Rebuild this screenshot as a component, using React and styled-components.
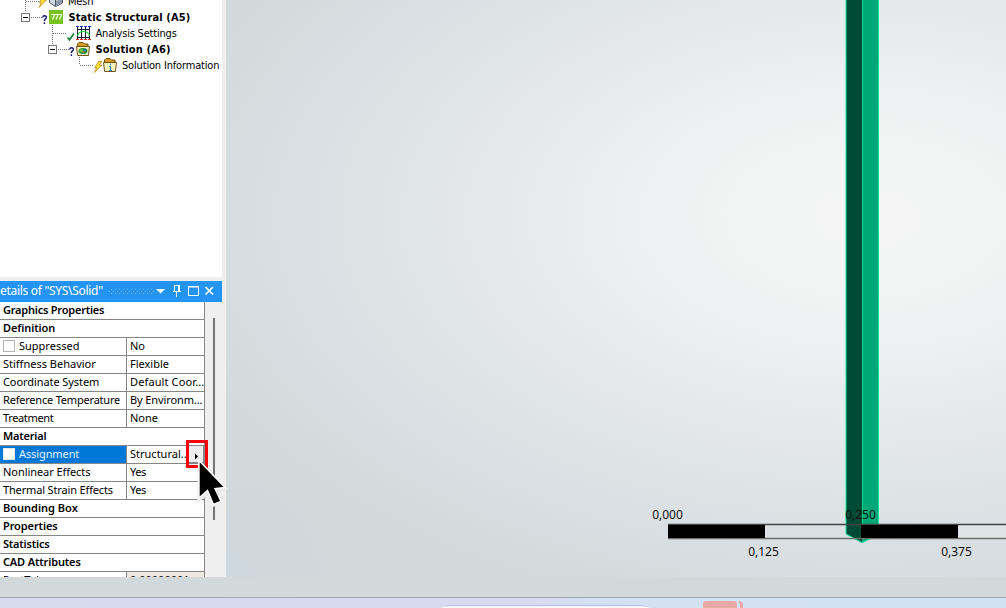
import React from 'react';
import styled, { createGlobalStyle } from 'styled-components';

const Global = createGlobalStyle`
  * { box-sizing: border-box; }
  body { margin: 0; overflow: hidden; background: #d2d9db; }
`;

const Window = styled.div`
  width: 1006px;
  height: 608px;
  display: flex;
  flex-direction: column;
  overflow: hidden;
  position: relative;
  background: #d2d9db;
  font-family: 'Noto Sans', 'Open Sans', sans-serif;
  color: #000;
`;

const Main = styled.main`
  height: 577px;
  display: flex;
`;

const Sidebar = styled.aside`
  width: 226px;
  height: 577px;
  flex: none;
  display: flex;
  flex-direction: column;
  background: #efefef;
`;

const Outline = styled.section`
  width: 222px;
  height: 277px;
  background: #fff;
  margin-bottom: 4px;
  overflow: hidden;
`;

const Tree = styled.div`
  margin-top: -6px;
  position: relative;
`;

const TreeLines = styled.svg`
  position: absolute;
  left: 0;
  top: 6px;
  display: block;
`;

const TreeItem = styled.div`
  height: 16px;
  display: flex;
  align-items: center;
  padding-left: ${(p) => p.$indent}px;
  font: ${(p) => (p.$bold ? 'bold' : 'normal')} 11px/16px 'DejaVu Sans Condensed', 'DejaVu Sans', sans-serif;
  font-stretch: condensed;
  letter-spacing: ${(p) => p.$track || 0}px;
  white-space: nowrap;
`;

const Titlebar = styled.header`
  width: 222px;
  height: 21px;
  flex: none;
  display: flex;
  align-items: center;
  overflow: hidden;
  background: #2494f2;
  color: #fff;
`;

const Title = styled.span`
  width: 107px;
  flex: none;
  font-size: 12px;
  line-height: 20px;
  padding-bottom: 1px;
  letter-spacing: ${(p) => p.$track}px;
  white-space: nowrap;
`;

const DetailsBody = styled.div`
  display: flex;
  flex: 1;
  min-height: 0;
  overflow: hidden;
`;

const Grid = styled.div`
  width: 205px;
  flex: none;
  border-right: 1px solid #868686;
  background: #fff;
`;

const Row = styled.div`
  height: 18px;
  display: flex;
  border-bottom: 1px solid #868686;
  font-size: 11px;
  line-height: 15px;
  white-space: nowrap;
`;

const Group = styled.div`
  padding-left: 3px;
  font-weight: 600;
  letter-spacing: ${(p) => p.$track || 0}px;
`;

const Name = styled.div`
  width: 127px;
  flex: none;
  display: flex;
  align-items: flex-start;
  padding-left: 3px;
  border-right: 1px solid #868686;
  letter-spacing: ${(p) => p.$track || 0}px;
  background: ${(p) => (p.$selected ? '#0078d7' : '#fff')};
  color: ${(p) => (p.$selected ? '#e4f1fb' : '#000')};
`;

const Value = styled.div`
  flex: 1;
  padding-left: 3px;
  overflow: hidden;
  letter-spacing: ${(p) => p.$track || 0}px;
  background: ${(p) => (p.$readonly ? '#ece9e4' : '#fff')};
`;

const Check = styled.span`
  width: 12px;
  height: 12px;
  margin: 2px 4px 0 0;
  border: 1px solid ${(p) => (p.$selected ? '#e8e8e8' : '#b4b4b4')};
  background: #fff;
`;

const ScrollTrack = styled.div`
  width: 17px;
  padding: 16px 0 0 8px;
`;

const ScrollThumb = styled.div`
  width: 2px;
  height: 202px;
  background: #747474;
`;

const Viewport = styled.section`
  flex: 1;
  position: relative;
  overflow: hidden;
  background:
    radial-gradient(circle 110px at 0 577px, #ced6de 0%, rgba(206, 214, 222, 0) 100%),
    radial-gradient(ellipse 720px 410px at 640px 217px, #f5f5f5 0%, #f3f4f4 15%, #edeff0 34%, #e4e8ea 54%, #dae0e3 78%, #d2d9db 100%);
`;

const Scene = styled.svg`
  display: block;
`;

const ScaleLabel = styled.span`
  position: absolute;
  left: ${(p) => p.$x}px;
  top: ${(p) => p.$y}px;
  width: 60px;
  text-align: center;
  font-size: 12px;
  line-height: 16px;
  color: #111;
`;

const StatusStrip = styled.div`
  height: 20px;
  flex: none;
  background: #d2d9db;
`;

const Taskbar = styled.footer`
  height: 11px;
  flex: none;
  display: flex;
  align-items: flex-end;
  border-top: 1px solid #9fa5b2;
  background: linear-gradient(90deg, #d7dbee 0, #d8daf0 52%, #d4e1f1 60%, #d2e2f4 100%);
`;

const SearchPill = styled.div`
  width: 210px;
  height: 3px;
  margin-left: 440px;
  border-top: 1px solid #b4c0dc;
  border-radius: 12px 12px 0 0 / 3px 3px 0 0;
  background: #f4f7fc;
`;

const AppIcon = styled.svg`
  display: block;
  margin-left: 53px;
`;

const Highlight = styled.div`
  position: absolute;
  left: 186px;
  top: 440px;
  width: 22px;
  height: 28px;
  padding: 3px 0 0 0;
  border: 3px solid #fb0007;
`;

const Expand = styled.button`
  display: block;
  width: 16px;
  height: 17px;
  margin: 0;
  padding: 5px 0 0 5px;
  border: 0;
  border-right: 2px solid #888;
  border-bottom: 1px solid #888;
  background: #eee;
`;

const Pointer = styled.svg`
  position: absolute;
  left: 194px;
  top: 456px;
`;

const treeItems = [
  { text: 'Mesh', indent: 68, track: -0.2 },
  { text: 'Static Structural (A5)', indent: 68.5, bold: true, track: 0.11 },
  { text: 'Analysis Settings', indent: 95.5, track: -0.2 },
  { text: 'Solution (A6)', indent: 95.5, bold: true, track: 0.14 },
  { text: 'Solution Information', indent: 122, track: -0.17 },
];

const rows = [
  { group: 'Graphics Properties', track: -0.22 },
  { group: 'Definition', track: -0.1 },
  { name: 'Suppressed', value: 'No', check: true },
  { name: 'Stiffness Behavior', value: 'Flexible' },
  { name: 'Coordinate System', value: 'Default Coor...', track: -0.08, vtrack: 0.12 },
  { name: 'Reference Temperature', value: 'By Environm...', track: -0.2, vtrack: -0.1 },
  { name: 'Treatment', value: 'None', track: -0.35 },
  { group: 'Material', track: -0.2 },
  { name: 'Assignment', value: 'Structural...', track: -0.1, check: true, selected: true },
  { name: 'Nonlinear Effects', value: 'Yes', track: -0.06, vtrack: -0.5 },
  { name: 'Thermal Strain Effects', value: 'Yes', track: -0.15, vtrack: -0.5 },
  { group: 'Bounding Box' },
  { group: 'Properties', track: -0.1 },
  { group: 'Statistics', track: -0.2 },
  { group: 'CAD Attributes', track: -0.15 },
  { name: 'PartTol...', value: '0,00000001', readonly: true },
];

const Bolt = ({ x, y }) => (
  <path
    transform={`translate(${x} ${y})`}
    d="M5 0.5 L8.5 0.5 L6 4 L8.5 4 L1 11.5 L3.2 6.8 L1.2 6.8 Z"
    fill="#ffdc35"
    stroke="#b98316"
    strokeWidth="0.7"
  />
);

const Query = ({ x, y }) => (
  <g transform={`translate(${x} ${y})`} fill="none" stroke="#18186e" strokeWidth="1.5">
    <path d="M0.7 2.5 Q0.9 0.8 2.6 0.8 Q4.5 0.8 4.4 2.4 Q4.3 3.4 3 4.4 Q2.4 4.9 2.4 6" />
    <path d="M2.4 7.3 V9" />
  </g>
);

const Folder = ({ x, y }) => (
  <g transform={`translate(${x} ${y})`}>
    <path d="M1.5 4.5 V2 L3 0.5 H7 L8.5 2 H12 V4.5" fill="#d99b24" stroke="#6f5313" />
    <path d="M0.5 4.5 H13.5 L12.4 13.5 H1.6 Z" fill="#fff3bd" stroke="#6f5313" />
  </g>
);

const Collapse = ({ x, y }) => (
  <g transform={`translate(${x} ${y})`} shapeRendering="crispEdges">
    <rect x="0.5" y="0.5" width="8" height="8" fill="#fff" stroke="#777" />
    <path d="M2 4.5 H7" stroke="#000" />
  </g>
);

function TreeGlyphs() {
  return (
    <TreeLines width="122" height="76">
      <g stroke="#777" strokeDasharray="1 1" shapeRendering="crispEdges" fill="none">
        <path d="M25.5 0 V12 M26 1.5 H39 M31 17.5 H42 M52.5 25 V45 M53 33.5 H67 M58 49.5 H69 M79.5 57 V65 M80 65.5 H94" />
      </g>
      <Bolt x={38} y={-4} />
      <path d="M49.5 -3 V2.5 L55.5 6.5 L62.5 3 V-3 M55.5 6 V0 L62 -2" fill="#cfd8e4" stroke="#4b535f" />
      <path d="M56 1 L62 -2 V3 L56 6 Z" fill="#8f9aaa" />
      <Collapse x={21} y={13} />
      <Query x={42} y={15} />
      <rect x="49" y="10" width="14" height="14" fill="#78c322" />
      <path d="M51 14.5 H62 M54.5 15 L52.5 19.5 M58 15 L56 19.5 M61.5 15 L59.5 19.5" stroke="#f4ffe4" strokeWidth="1.2" fill="none" />
      <path d="M67.5 37.5 L69.5 39.8 L74 33.5" stroke="#138534" strokeWidth="1.7" fill="none" />
      <g fill="none">
        <path d="M77.5 27 V39 M81.5 27 V39 M85.5 27 V39 M89.5 27 V39 M77 29.5 H90 M77 37.5 H90" stroke="#1c1c30" />
        <path d="M77.5 36 Q78.5 31.5 83.5 31.5 Q88.5 31.5 89.5 36" stroke="#19d336" strokeWidth="1.2" />
        <path d="M76 26.5 H79 M80 26.5 H83 M84 26.5 H87 M88 26.5 H91" stroke="#1e37ff" />
        <path d="M76 39.5 H79 M80 39.5 H83 M84 39.5 H87 M88 39.5 H91" stroke="#f02828" />
      </g>
      <Collapse x={48} y={45} />
      <Query x={69} y={47} />
      <Folder x={76} y={42} />
      <ellipse cx="83" cy="51" rx="4.5" ry="2.9" fill="#1b873f" />
      <path d="M79 50 L82 48.5 L84 51 L81 52.5 Z" fill="#65c83e" />
      <path d="M83 48.8 L86 49.3 L85 52 Z" fill="#2e72b9" />
      <path d="M81 51.5 L84.5 51.5 L84 53 Z" fill="#ec8338" />
      <Bolt x={93.5} y={61} />
      <Folder x={103} y={58} />
      <path d="M110.5 63.5 V65 M109 66.5 H110.5 V70 M109 70.5 H112" stroke="#1680db" fill="none" />
    </TreeLines>
  );
}

function TitleControls() {
  return (
    <svg width="115" height="21">
      <defs>
        <pattern id="grip" width="4" height="4" patternUnits="userSpaceOnUse">
          <rect width="1" height="1" fill="#73b9f4" />
          <rect x="2" y="2" width="1" height="1" fill="#73b9f4" />
        </pattern>
      </defs>
      <rect x="1" y="8" width="46" height="5" fill="url(#grip)" />
      <path d="M49 8 H58 L53.5 12.5 Z" fill="#fff" />
      <path d="M67 4.5 H73 M67.5 4.5 V10.5 M71.5 4.5 V10.5 M72.5 4.5 V10.5 M66 10.5 H74 M69.5 11 V16" stroke="#fff" fill="none" />
      <rect x="81.5" y="5.5" width="10" height="9" fill="none" stroke="#fff" />
      <path d="M81 6 H92" stroke="#fff" />
      <path d="M98.5 6 L106 13.5 M106 6 L98.5 13.5" stroke="#fff" strokeWidth="1.7" />
    </svg>
  );
}

function Beam() {
  return (
    <Scene width="780" height="577">
      <path d="M620 0 H636 V543 L620 534 Z" fill="#004b35" />
      <path d="M636 0 H653 V534 L636 543 Z" fill="#00a877" />
      <path d="M620 0 V534 L636 542.5 L646 538" stroke="#00eda0" fill="none" />
      <path d="M636.5 0 V525" stroke="#00d990" />
      <path d="M652.5 0 V525" stroke="#00eda0" />
      <rect x="653" y="524" width="127" height="15" fill="#dfe4e6" />
      <path d="M442 524.5 H780" stroke="#3e4343" strokeWidth="1.3" />
      <path d="M442 538.5 H780" stroke="#6a6e6e" strokeWidth="1.3" />
      <rect x="442" y="525" width="97" height="13" fill="#000" />
      <rect x="635" y="525" width="97" height="13" fill="#000" />
    </Scene>
  );
}

export default function App() {
  return (
    <>
      <Global />
      <Window>
        <Main>
          <Sidebar>
            <Outline>
              <Tree>
                {treeItems.map((t) => (
                  <TreeItem key={t.text} $indent={t.indent} $bold={t.bold} $track={t.track}>{t.text}</TreeItem>
                ))}
                <TreeGlyphs />
              </Tree>
            </Outline>
            <Titlebar>
              <Title $track={-0.3}>etails of "SYS\Solid"</Title>
              <TitleControls />
            </Titlebar>
            <DetailsBody>
              <Grid>
                {rows.map((r) => (
                  <Row key={r.group || r.name}>
                    {r.group ? <Group $track={r.track}>{r.group}</Group> : (
                      <>
                        <Name $selected={r.selected} $track={r.track}>
                          {r.check && <Check $selected={r.selected} />}
                          {r.name}
                        </Name>
                        <Value $readonly={r.readonly} $track={r.vtrack}>{r.value}</Value>
                      </>
                    )}
                  </Row>
                ))}
              </Grid>
              <ScrollTrack><ScrollThumb /></ScrollTrack>
            </DetailsBody>
          </Sidebar>
          <Viewport>
            <Beam />
            <ScaleLabel $x={411.5} $y={507}>0,000</ScaleLabel>
            <ScaleLabel $x={604.5} $y={507}>0,250</ScaleLabel>
            <ScaleLabel $x={507.5} $y={544}>0,125</ScaleLabel>
            <ScaleLabel $x={700.5} $y={544}>0,375</ScaleLabel>
          </Viewport>
        </Main>
        <StatusStrip />
        <Taskbar>
          <SearchPill />
          <AppIcon width="42" height="8">
            <path d="M0 8 V4 Q0 1 3 1 H31 Q34 1 34 4 V8 Z M35 1 Q40 1 40 5 V8 H37 V4 Z" fill="#e8aaa6" />
          </AppIcon>
        </Taskbar>
        <Highlight>
          <Expand aria-label="Expand">
            <svg width="5" height="7" style={{ display: 'block' }}><path d="M1 0.5 L4 3.5 L1 6.5 Z" fill="#000" /></svg>
          </Expand>
        </Highlight>
        <Pointer width="36" height="52">
          <path d="M4 3 L3 47 L13.5 39.5 L19 51 L29.5 46.5 L24.5 36 L34.5 33 Z" fill="#e9eaea" />
          <path d="M5 4.5 V42 L13.5 34.5 L19.5 48.5 L27 45.5 L21 32.5 L31 31.5 Z" fill="#000" stroke="#fff" strokeWidth="1.4" />
        </Pointer>
      </Window>
    </>
  );
}
